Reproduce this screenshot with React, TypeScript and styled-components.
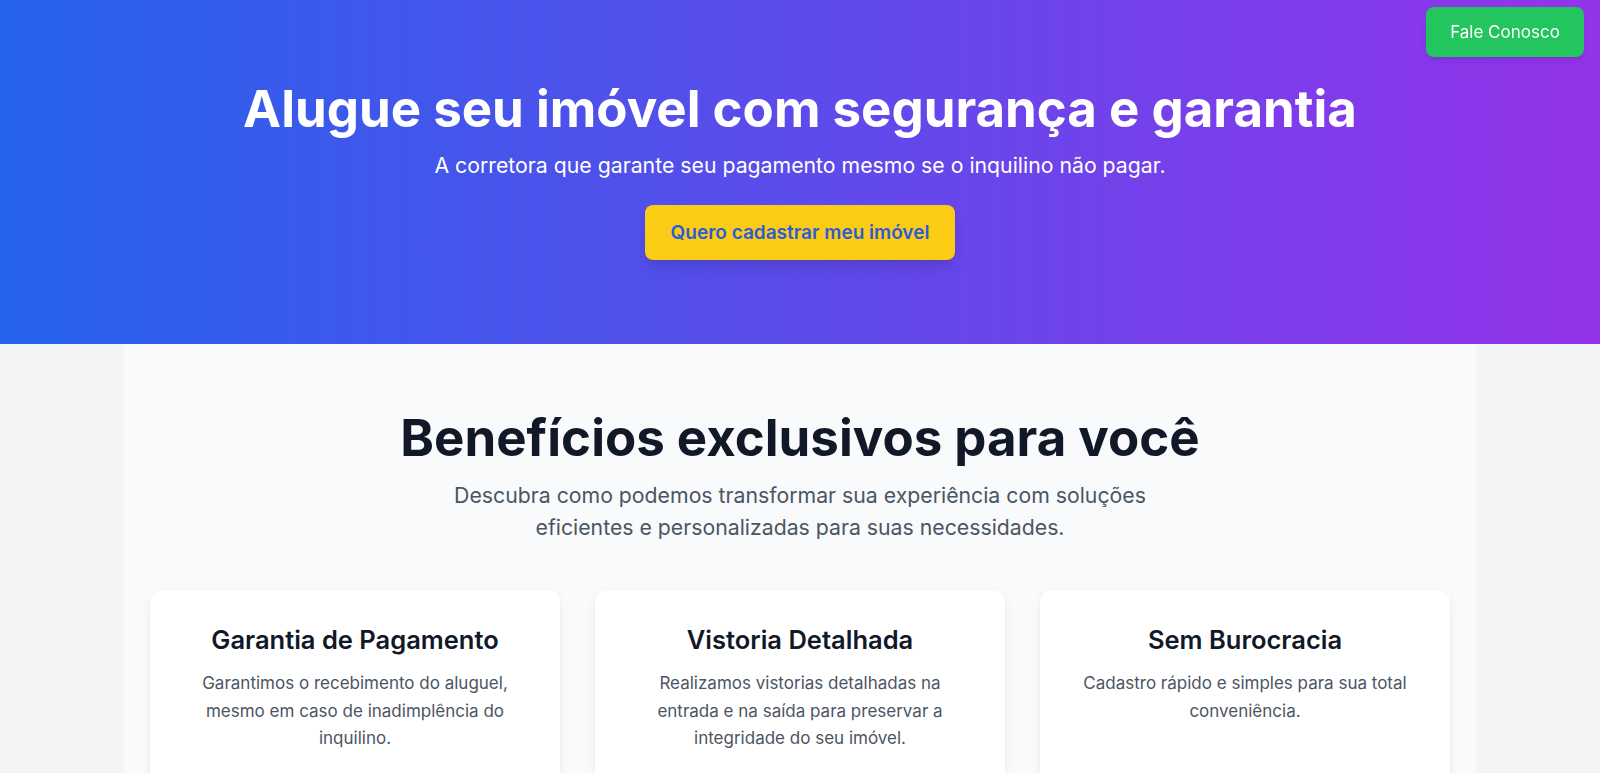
import React from "react";
import styled, { createGlobalStyle } from "styled-components";

const GlobalStyle = createGlobalStyle`
  * { box-sizing: border-box; }
  html, body { margin: 0; padding: 0; }
  body {
    font-family: Inter, "Noto Sans", "Liberation Sans", sans-serif;
    background: #f3f4f6;
    color: #111827;
    -webkit-font-smoothing: antialiased;
  }
`;

const Hero = styled.header`
  background: linear-gradient(to right, #2563eb, #9333ea);
  padding: 83px 16px 84px;
  display: flex;
  flex-direction: column;
  align-items: center;
  text-align: center;
  color: #ffffff;
`;

const HeroTitle = styled.h1`
  margin: 0;
  font-size: 51px;
  line-height: 51px;
  font-weight: 700;
`;

const HeroSubtitle = styled.p`
  margin: 15px 0 0;
  font-size: 21.25px;
  line-height: 32px;
  font-weight: 400;
`;

const PrimaryButton = styled.button`
  margin-top: 24px;
  height: 55px;
  padding: 0 26px;
  border: none;
  border-radius: 8px;
  background: #facc15;
  color: #2f5bd4;
  font-family: inherit;
  font-size: 19px;
  font-weight: 600;
  cursor: pointer;
  box-shadow: 0 10px 15px -3px rgba(0, 0, 0, 0.12), 0 4px 6px -4px rgba(0, 0, 0, 0.1);
`;

const ContactButton = styled.button`
  position: fixed;
  top: 7px;
  right: 16px;
  width: 158px;
  height: 50px;
  border: none;
  border-radius: 8px;
  background: #22c55e;
  color: #ffffff;
  font-family: inherit;
  font-size: 17px;
  font-weight: 400;
  cursor: pointer;
  box-shadow: 0 4px 6px -1px rgba(0, 0, 0, 0.1);
`;

const Benefits = styled.section`
  max-width: 1352px;
  margin: 0 auto;
  background: #f9fafb;
  padding: 67px 26px 40px;
  display: flex;
  flex-direction: column;
  align-items: center;
  text-align: center;
`;

const SectionTitle = styled.h2`
  margin: 0;
  font-size: 51px;
  line-height: 54px;
  font-weight: 700;
  color: #111827;
`;

const SectionSubtitle = styled.p`
  margin: 14px 0 0;
  max-width: 768px;
  font-size: 21.25px;
  line-height: 32px;
  color: #4b5563;
`;

const CardGrid = styled.div`
  margin-top: 47px;
  width: 100%;
  display: grid;
  grid-template-columns: repeat(3, 1fr);
  gap: 35px;
`;

const Card = styled.article`
  background: #ffffff;
  border-radius: 12px;
  padding: 32px 36px;
  box-shadow: 0 4px 12px rgba(0, 0, 0, 0.05), 0 1px 3px rgba(0, 0, 0, 0.04);
`;

const CardTitle = styled.h3`
  margin: 0;
  font-size: 25.5px;
  line-height: 36px;
  font-weight: 600;
  color: #111827;
`;

const CardText = styled.p`
  margin: 12px 0 0;
  font-size: 17px;
  line-height: 27.6px;
  color: #4b5563;
`;

const benefits = [
  {
    title: "Garantia de Pagamento",
    text: "Garantimos o recebimento do aluguel, mesmo em caso de inadimplência do inquilino.",
  },
  {
    title: "Vistoria Detalhada",
    text: "Realizamos vistorias detalhadas na entrada e na saída para preservar a integridade do seu imóvel.",
  },
  {
    title: "Sem Burocracia",
    text: "Cadastro rápido e simples para sua total conveniência.",
  },
];

export default function App() {
  return (
    <>
      <GlobalStyle />
      <ContactButton>Fale Conosco</ContactButton>
      <Hero>
        <HeroTitle>Alugue seu imóvel com segurança e garantia</HeroTitle>
        <HeroSubtitle>A corretora que garante seu pagamento mesmo se o inquilino não pagar.</HeroSubtitle>
        <PrimaryButton>Quero cadastrar meu imóvel</PrimaryButton>
      </Hero>
      <Benefits>
        <SectionTitle>Benefícios exclusivos para você</SectionTitle>
        <SectionSubtitle>
          Descubra como podemos transformar sua experiência com soluções eficientes e personalizadas para suas necessidades.
        </SectionSubtitle>
        <CardGrid>
          {benefits.map((b) => (
            <Card key={b.title}>
              <CardTitle>{b.title}</CardTitle>
              <CardText>{b.text}</CardText>
            </Card>
          ))}
        </CardGrid>
      </Benefits>
    </>
  );
}
